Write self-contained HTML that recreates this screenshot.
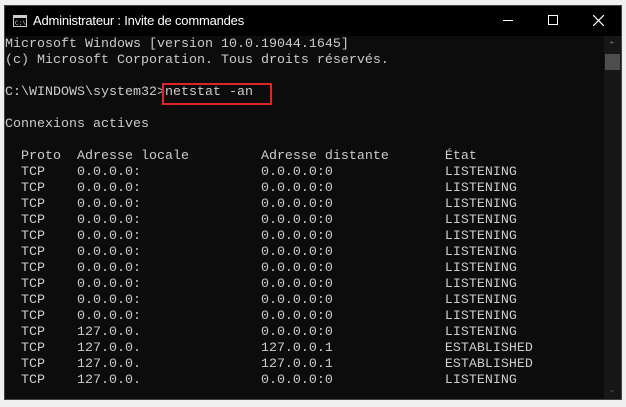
<!DOCTYPE html>
<html><head><meta charset="utf-8"><style>
*{margin:0;padding:0;box-sizing:border-box}
body{width:626px;height:407px;background:#f0f0f0;position:relative;overflow:hidden}
#win{position:absolute;left:4px;top:5px;width:618px;height:395px;background:#0c0c0c;border:1px solid #444}
#title{position:absolute;left:0;top:0;width:100%;height:30px;background:#000;color:#fff;font:13px "Liberation Sans",sans-serif}
#title .t{position:absolute;left:28px;top:7px;letter-spacing:-0.2px}
#con{position:absolute;left:0;top:31px;color:#cccccc;font:13.33px/16px "Liberation Mono",monospace;white-space:pre}
#sb{position:absolute;right:0;top:30px;width:17px;bottom:0;background:#171717}
#thumb{position:absolute;left:1px;top:18px;width:15px;height:16px;background:#4d4d4d}
#box{position:absolute;left:157px;top:77px;width:110px;height:22px;border:2px solid #e0252a}
</style></head><body>
<div id="win">
<div id="title">
<svg style="position:absolute;left:8px;top:9px" width="14" height="12"><rect x="0.5" y="0.5" width="13" height="11" fill="#000" stroke="#ccc"/><rect x="1" y="1" width="12" height="2" fill="#ccc"/><text x="2" y="10" font-size="6" fill="#ccc" font-family="Liberation Mono">C:\</text></svg>
<span class="t">Administrateur : Invite de commandes</span>
<div style="position:absolute;left:498px;top:14px;width:10px;height:1px;background:#fff"></div>
<div style="position:absolute;left:543px;top:9px;width:10px;height:10px;border:1px solid #fff"></div>
<svg style="position:absolute;left:588px;top:9px" width="11" height="11"><path d="M0 0L11 11M11 0L0 11" stroke="#fff" stroke-width="1.2"/></svg>
</div>
<div id="con">Microsoft Windows [version 10.0.19044.1645]
(c) Microsoft Corporation. Tous droits réservés.

C:\WINDOWS\system32&gt;netstat -an

Connexions actives

  Proto  Adresse locale         Adresse distante       État
  TCP    0.0.0.0:               0.0.0.0:0              LISTENING
  TCP    0.0.0.0:               0.0.0.0:0              LISTENING
  TCP    0.0.0.0:               0.0.0.0:0              LISTENING
  TCP    0.0.0.0:               0.0.0.0:0              LISTENING
  TCP    0.0.0.0:               0.0.0.0:0              LISTENING
  TCP    0.0.0.0:               0.0.0.0:0              LISTENING
  TCP    0.0.0.0:               0.0.0.0:0              LISTENING
  TCP    0.0.0.0:               0.0.0.0:0              LISTENING
  TCP    0.0.0.0:               0.0.0.0:0              LISTENING
  TCP    0.0.0.0:               0.0.0.0:0              LISTENING
  TCP    127.0.0.               0.0.0.0:0              LISTENING
  TCP    127.0.0.               127.0.0.1              ESTABLISHED
  TCP    127.0.0.               127.0.0.1              ESTABLISHED
  TCP    127.0.0.               0.0.0.0:0              LISTENING</div>
<div id="box"></div>
<div id="sb"><div style="position:absolute;left:4px;top:4px;color:#888;font:9px 'Liberation Sans'">&#8963;</div><div id="thumb"></div><div style="position:absolute;left:4px;bottom:4px;color:#555;font:9px 'Liberation Sans'">&#8964;</div></div>
</div>
</body></html>
